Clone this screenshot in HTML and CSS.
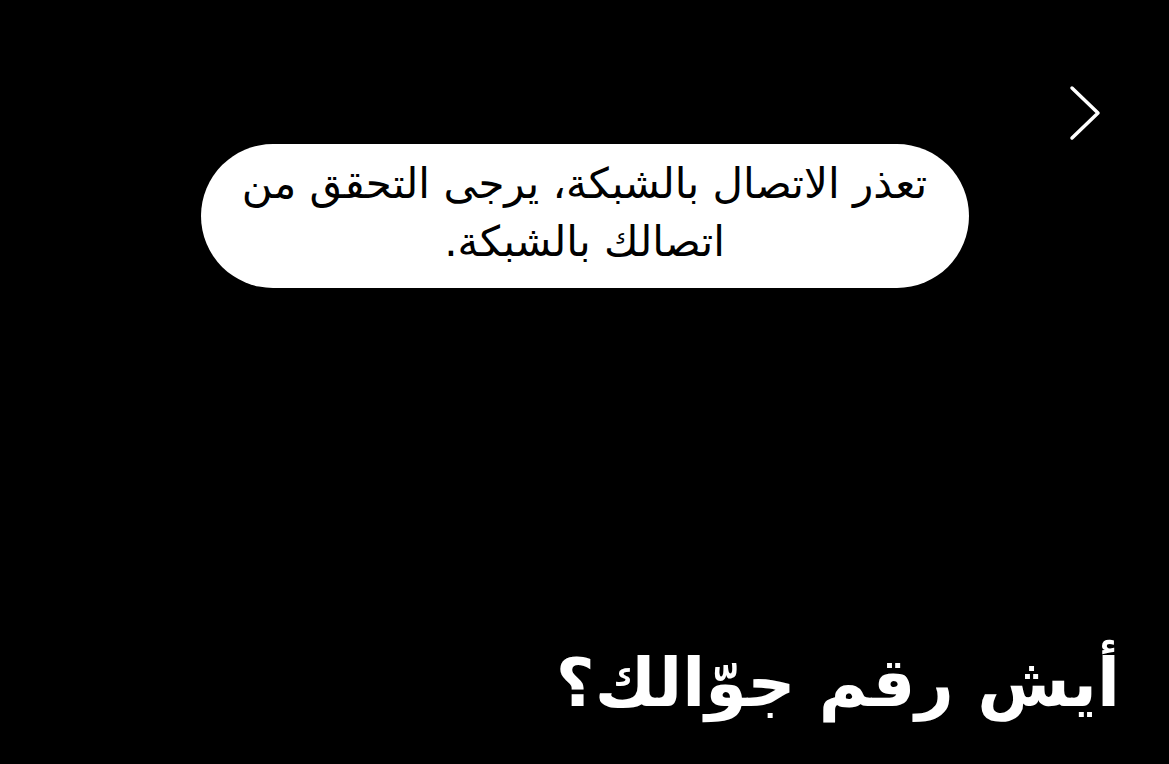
FILE: index.html
```html
<!DOCTYPE html>
<html lang="ar" dir="rtl">
<head>
<meta charset="utf-8">
<link rel="stylesheet" href="styles.css">
</head>
<body>
<div class="screen">
  <div class="topbar">
    <svg class="chevron" width="34" height="56" viewBox="0 0 34 56" fill="none">
      <path d="M3 3 L29 28 L3 53" stroke="#fff" stroke-width="3.5" stroke-linecap="round" stroke-linejoin="round"/>
    </svg>
  </div>
  <div class="toast-wrap">
    <div class="toast">تعذر الاتصال بالشبكة، يرجى التحقق من اتصالك بالشبكة.</div>
  </div>
  <div class="spacer"></div>
  <h1 class="question">أيش رقم جوّالك؟</h1>
</div>
</body>
</html>
```
FILE: styles.css
```css
html, body {
  margin: 0;
  padding: 0;
  background: #000;
}
.screen {
  width: 1169px;
  height: 764px;
  display: flex;
  flex-direction: column;
  font-family: "DejaVu Sans", "Noto Sans", sans-serif;
  color: #fff;
  overflow: hidden;
}
.topbar {
  display: flex;
  justify-content: flex-end;
  direction: ltr;
  padding: 85px 66px 0 0;
  height: 56px;
}
.chevron {
  display: block;
}
.toast-wrap {
  display: flex;
  justify-content: center;
  margin-top: 3px;
}
.toast {
  width: 768px;
  height: 144px;
  box-sizing: border-box;
  padding: 10px 36px 16px;
  background: #fff;
  color: #000;
  border-radius: 72px;
  font-size: 42px;
  line-height: 58px;
  text-align: center;
  display: flex;
  align-items: center;
  justify-content: center;
}
.spacer {
  flex: 1;
}
.question {
  margin: 0;
  padding: 0 49px 36px 0;
  font-size: 67px;
  font-weight: bold;
  line-height: 90px;
  text-align: right;
}
```
